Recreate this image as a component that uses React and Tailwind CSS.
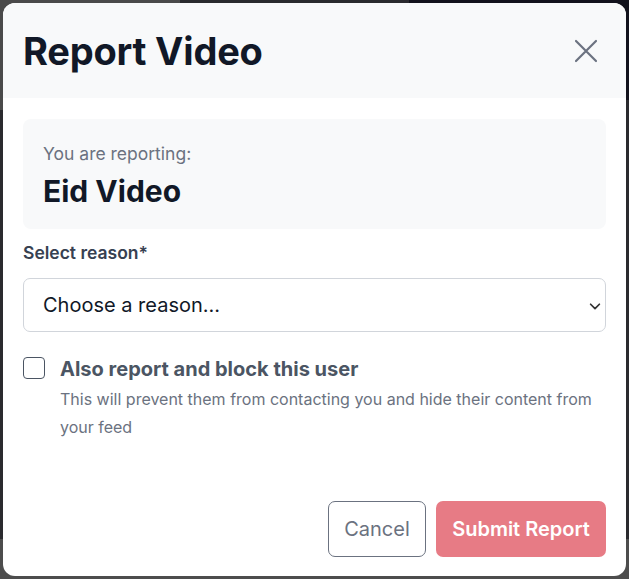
import React from 'react';

const ReportModal = () => {
    return (
        <div className="flex h-[573px] w-[623px] flex-col overflow-hidden rounded-[12px] bg-white">
            <div className="flex h-[95px] shrink-0 items-center justify-between bg-[#f8f9fa] pl-[20px] pr-[28px]">
                <h2 className="text-[38px] font-bold leading-none tracking-[-0.2px] text-[#111827]">Report Video</h2>
                <button className="text-[#6b7280]">
                    <svg width="24" height="24" viewBox="0 0 24 24" fill="none" stroke="currentColor" strokeWidth="2.2" strokeLinecap="round">
                        <path d="M2 2 L22 22 M22 2 L2 22" />
                    </svg>
                </button>
            </div>

            <div className="flex flex-1 flex-col px-[20px] pt-[21px] pb-[19px]">
                <div className="rounded-[8px] bg-[#f8f9fa] px-[20px] pt-[24px] pb-[22px]">
                    <p className="text-[17.5px] leading-[22px] text-[#6b7280]">You are reporting:</p>
                    <p className="mt-[10px] text-[30px] font-bold leading-[32px] text-[#111827]">Eid Video</p>
                </div>

                <label className="mt-[13px] block text-[17.5px] font-semibold leading-[22px] text-[#374151]">Select reason*</label>
                <div className="relative mt-[14px]">
                    <div className="flex h-[54px] items-center rounded-[7px] border border-[#d1d5db] bg-white px-[19px] text-[20px] text-[#111827]">
                        Choose a reason...
                    </div>
                    <svg className="absolute right-[4px] top-[21px]" width="14" height="14" viewBox="0 0 16 16" fill="none" stroke="#333" strokeWidth="2" strokeLinecap="round" strokeLinejoin="round">
                        <path d="M3 6 L8 11 L13 6" />
                    </svg>
                </div>

                <div className="mt-[25px] flex gap-[15px]">
                    <div className="h-[22px] w-[22px] shrink-0 rounded-[4px] border border-[#4b5563] bg-white" />
                    <div>
                        <p className="text-[20px] font-bold leading-[24px] text-[#4b5563]">Also report and block this user</p>
                        <p className="mt-[4px] text-[16px] leading-[28px] text-[#6b7280]">This will prevent them from contacting you and hide their content from your feed</p>
                    </div>
                </div>

                <div className="mt-auto flex justify-end gap-[10px]">
                    <button className="h-[56px] w-[98px] rounded-[7px] border border-[#6b7280] bg-white text-[20px] text-[#6b7280]">Cancel</button>
                    <button className="h-[56px] w-[170px] rounded-[7px] bg-[#e77b85] text-[20px] font-semibold text-white">Submit Report</button>
                </div>
            </div>
        </div>
    );
};

export default function App() {
    return (
        <div className="relative h-[579px] w-[629px] overflow-hidden bg-[#2a2a2e]" style={{ fontFamily: 'Inter, "Noto Sans", sans-serif' }}>
            <div className="absolute left-0 top-0 h-[110px] w-[180px] bg-[#4a4a4a]" />
            <div className="absolute right-0 top-0 h-[100px] w-[220px] bg-[#12121c]" />
            <div className="absolute bottom-0 left-0 h-[40px] w-full bg-[#4d4d4d]" />
            <div className="relative p-[3px]">
                <ReportModal />
            </div>
        </div>
    );
}
